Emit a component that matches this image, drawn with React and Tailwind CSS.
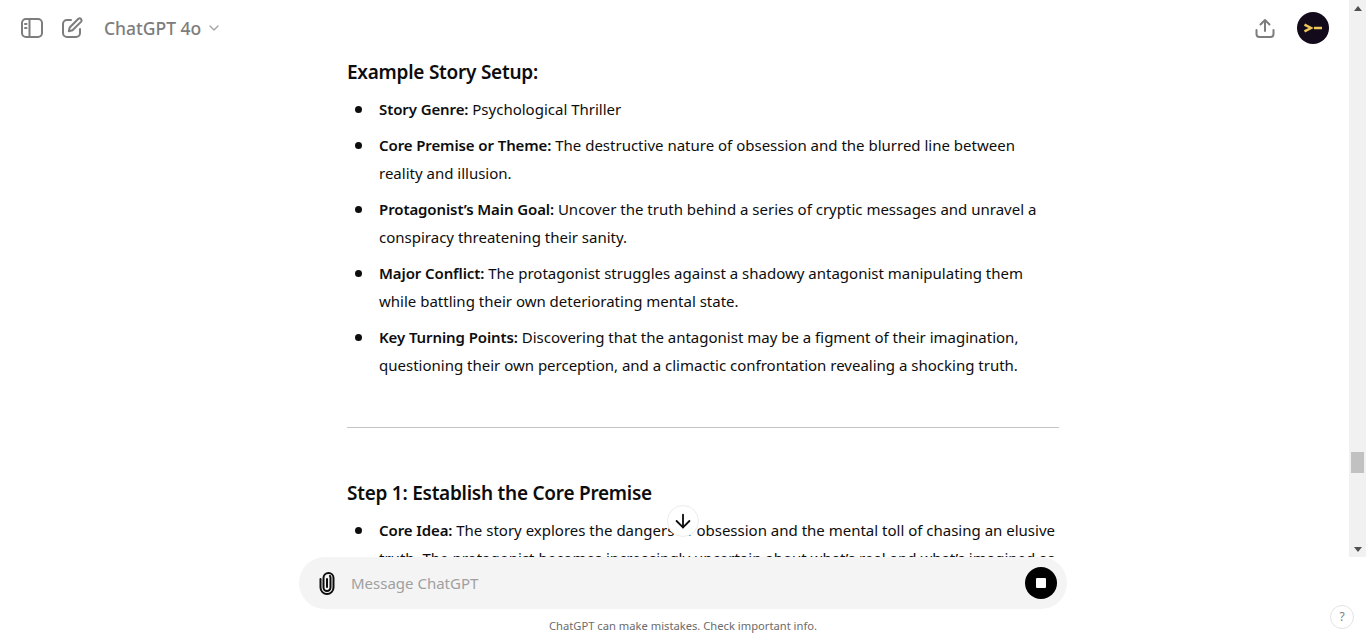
import { ChevronDown, ArrowDown } from "lucide-react";

const setup = [
  ["Story Genre:", " Psychological Thriller"],
  ["Core Premise or Theme:", " The destructive nature of obsession and the blurred line between reality and illusion."],
  ["Protagonist’s Main Goal:", " Uncover the truth behind a series of cryptic messages and unravel a conspiracy threatening their sanity."],
  ["Major Conflict:", " The protagonist struggles against a shadowy antagonist manipulating them while battling their own deteriorating mental state."],
  ["Key Turning Points:", " Discovering that the antagonist may be a figment of their imagination, questioning their own perception, and a climactic confrontation revealing a shocking truth."],
];

function Bullet({ label, text }) {
  return (
    <li className="relative pl-[32px] mb-2 leading-[28px]">
      <span className="absolute left-[8px] top-[11px] w-[7px] h-[7px] rounded-full bg-[#0d0d0d]" />
      <strong className="font-semibold tracking-[-0.1px]">{label}</strong>
      {text}
    </li>
  );
}

export default function App() {
  return (
    <div className="relative flex flex-col h-[641px] overflow-hidden bg-white text-[#0d0d0d] font-['Noto_Sans','Open_Sans',sans-serif] text-[15px]">
      <div className="flex h-[557px] shrink-0">
        <main className="flex-1 flex flex-col min-w-0">
          <header className="flex items-center h-[56px] shrink-0 pl-[20px] pr-[20px]">
            <svg width="24" height="24" viewBox="0 0 24 24" fill="none" stroke="#7d7d7d" strokeWidth="2" strokeLinejoin="round" className="mr-[16px]">
              <rect x="2" y="3" width="20" height="18" rx="4" />
              <path d="M9.5 3v18" />
              <path d="M5 8h1.5M5 12h1.5" strokeLinecap="round" />
            </svg>
            <svg width="24" height="24" viewBox="0 0 24 24" fill="none" stroke="#7d7d7d" strokeWidth="2" strokeLinecap="round" strokeLinejoin="round" className="mr-[20px]">
              <path d="M11 4H7a4 4 0 0 0-4 4v9a4 4 0 0 0 4 4h9a4 4 0 0 0 4-4v-4" />
              <path d="M18.4 2.8a2 2 0 0 1 2.8 2.8L12.5 14.3 8.8 15.2l.9-3.7z" />
            </svg>
            <span className="text-[17.5px] font-medium text-[#7d7d7d]">ChatGPT 4o</span>
            <ChevronDown size={16} strokeWidth={2} className="ml-[5px] text-[#a3a3a3]" />
            <svg width="24" height="24" viewBox="0 0 24 24" fill="none" stroke="#7d7d7d" strokeWidth="2" strokeLinecap="round" strokeLinejoin="round" className="ml-auto mr-[20px]">
              <path d="M12 15V4M7.5 8.5 12 4l4.5 4.5" />
              <path d="M3.5 14v4a3 3 0 0 0 3 3h11a3 3 0 0 0 3-3v-4" />
            </svg>
            <div className="w-[32px] h-[32px] rounded-full bg-[#130b1c] flex items-center justify-center">
              <svg width="18" height="10" viewBox="0 0 18 10" fill="none" stroke="#edc75a" strokeWidth="2.5">
                <path d="M.5 1.500 7 5 .5 8.500" />
                <path d="M10 5h8" />
              </svg>
            </div>
          </header>

          <div className="flex-1 overflow-hidden pl-[347px] w-[1059px] box-content">
            <div className="w-[712px]">
              <h3 className="text-[19px] leading-[32px] font-semibold tracking-[-0.25px]">Example Story Setup:</h3>
              <ul className="mt-[7px]">
                {setup.map(([label, text]) => (
                  <Bullet key={label} label={label} text={text} />
                ))}
              </ul>
              <hr className="border-t border-[#c4c4c4] mt-[48px] mb-[49px]" />
              <h3 className="text-[19px] leading-[32px] font-semibold tracking-[-0.25px]">Step 1: Establish the Core Premise</h3>
              <ul className="mt-[7px]">
                <Bullet label="Core Idea:" text=" The story explores the dangers of obsession and the mental toll of chasing an elusive truth. The protagonist becomes increasingly uncertain about what’s real and what’s imagined as" />
              </ul>
            </div>
          </div>
        </main>

        <div className="w-[17px] shrink-0 bg-[#f1f1f1] flex flex-col items-center justify-between pt-[6px] pb-[5px] relative">
          <span className="w-0 h-0 border-x-[4px] border-x-transparent border-b-[5px] border-b-[#505050]" />
          <span className="absolute left-[2px] top-[452px] w-[13px] h-[21px] bg-[#c1c1c1]" />
          <span className="w-0 h-0 border-x-[4px] border-x-transparent border-t-[5px] border-t-[#505050]" />
        </div>
      </div>

      <div className="absolute left-[667px] top-[505px] w-[32px] h-[32px] rounded-full bg-white border border-[#ececec] flex items-center justify-center">
        <ArrowDown size={22} strokeWidth={2} className="text-[#0d0d0d]" />
      </div>

      <div className="ml-[299px] w-[768px] h-[52px] rounded-[26px] bg-[#f4f4f4] flex items-center pl-[16px] pr-[10px] shrink-0">
        <svg width="24" height="24" viewBox="0 0 24 24" fill="none" stroke="#0d0d0d" strokeWidth="2" strokeLinecap="round" className="mr-[12px]">
          <path d="M8.500 7.500v9a3.500 3.500 0 0 0 7 0V6.500a5 5 0 0 0-.5-1.500M12 8v8M15.500 7v9.500M5.500 8v8.500a6.500 6.500 0 0 0 13 0V7a5 5 0 0 0-10 0" />
        </svg>
        <span className="text-[#a0a0a0]">Message ChatGPT</span>
        <div className="ml-auto w-[32px] h-[32px] rounded-full bg-black flex items-center justify-center">
          <span className="w-[10px] h-[10px] rounded-[1px] bg-white" />
        </div>
      </div>

      <p className="text-[11.2px] leading-[16px] text-[#6b6b6b] text-center w-[1366px] mt-[9px]">ChatGPT can make mistakes. Check important info.</p>

      <div className="absolute left-[1330px] top-[605px] w-[24px] h-[24px] rounded-full border border-[#e3e3e3] flex items-center justify-center text-[12px] text-[#7d7d7d]">?</div>
    </div>
  );
}
